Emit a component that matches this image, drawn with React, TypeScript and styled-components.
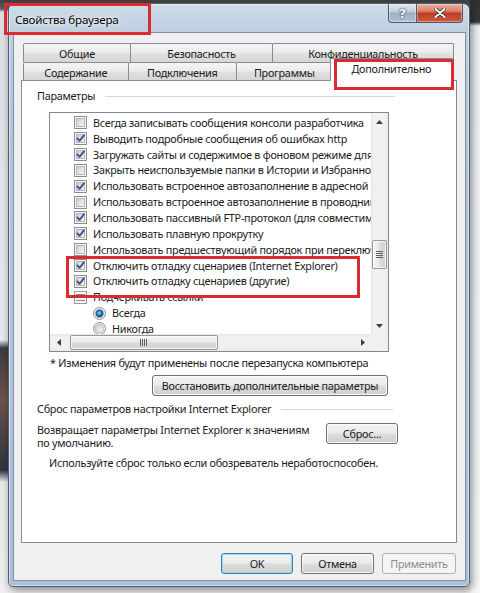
import React, { useId } from 'react';
import styled, { createGlobalStyle } from 'styled-components';

const UI_FONT = `'Noto Sans', 'Open Sans', 'DejaVu Sans', sans-serif`;
const ROW_H = 15.85;

const GlobalStyle = createGlobalStyle`
  * { box-sizing: border-box; }
  html, body { margin: 0; padding: 0; }
  body {
    font-family: ${UI_FONT};
    font-size: 10.8px;
    letter-spacing: -0.25px;
    color: #1a1a1a;
  }
`;

const Desktop = styled.div`
  position: relative;
  width: 480px;
  height: 593px;
  overflow: hidden;
  padding: 3px 0 0 8px;
  background:
    linear-gradient(180deg, #2e2e2e 0, #3a3a3a 22px, #eef1f5 26px, #f7f8fa 100%) right top / 10px 100% no-repeat,
    linear-gradient(180deg, #404040 0, #5b5b5b 9px, #dcdfe3 12px, #e7e9ec 340px, #3f3a3f 348px, #6b5348 400px, #2c3444 470px, #e9e9e9 482px, #f0f0f0 100%);
`;

const Window = styled.div`
  width: 462px;
  height: 584px;
  display: flex;
  flex-direction: column;
  padding: 0 3px 5px 4px;
  border: 1px solid #4e5f75;
  border-radius: 7px 7px 5px 5px;
  background: linear-gradient(180deg, #cfdbe8 0, #bfcfe1 28px, #b3c6dc 80px, #aabfd8 100%);
  box-shadow: inset 0 0 0 1px rgba(255, 255, 255, 0.45), 2px 3px 8px rgba(0, 0, 0, 0.45);
`;

const TitleBar = styled.div`
  height: 28px;
  display: flex;
  align-items: flex-start;
`;

const TitleText = styled.div`
  margin: 9px 0 0 2px;
  line-height: 14px;
  font-size: 11.6px;
  letter-spacing: -0.2px;
  color: #000;
  text-shadow: 0 0 6px rgba(255, 255, 255, 0.95), 0 0 2px rgba(255, 255, 255, 0.9);
`;

const CaptionButtons = styled.div`
  margin: 0 3px 0 auto;
  display: flex;
`;

const CaptionButton = styled.div<{ $kind: 'help' | 'close' }>`
  width: ${({ $kind }) => ($kind === 'close' ? 46 : 29)}px;
  height: 19px;
  display: flex;
  align-items: center;
  justify-content: center;
  border: 1px solid #4a5a70;
  border-top: 0;
  border-left-width: ${({ $kind }) => ($kind === 'close' ? 0 : 1)}px;
  border-radius: ${({ $kind }) => ($kind === 'close' ? '0 0 4px 0' : '0 0 0 4px')};
  background: ${({ $kind }) =>
    $kind === 'close'
      ? 'linear-gradient(180deg, #eab0a2 0, #d9806d 40%, #c23b22 52%, #cf5a3f 100%)'
      : 'linear-gradient(180deg, #e1e8f0 0, #c4d0de 40%, #9eb0c6 52%, #b2c3d7 100%)'};
  box-shadow: inset 0 0 0 1px rgba(255, 255, 255, 0.35);
  color: #fff;
  font-family: 'DejaVu Sans', sans-serif;
  font-weight: bold;
  font-size: 13px;
  letter-spacing: 0;
  text-shadow: 0 0 2px #22303f, 0 0 1px #22303f;
`;

const Client = styled.div`
  flex: 1;
  display: flex;
  flex-direction: column;
  border: 1px solid #7d90a8;
  background: #f0f0f0;
  padding: 10px 8px 0 7px;
`;

const TabStrip = styled.div`
  margin: 0 4px 0 2px;
  display: flex;
  flex-direction: column;
`;

const TabRow = styled.div<{ $h: number }>`
  height: ${({ $h }) => $h}px;
  display: flex;
  align-items: stretch;
`;

const Tab = styled.div<{ $w: number; $selected?: boolean }>`
  position: relative;
  width: ${({ $w, $selected }) => $w + ($selected ? 4 : 1)}px;
  margin-right: -1px;
  display: flex;
  align-items: center;
  justify-content: center;
  border: 1px solid #898c95;
  border-bottom: 0;
  border-radius: 2px 2px 0 0;
  white-space: nowrap;
  padding-top: 1px;
  background: linear-gradient(180deg, #f4f4f4 0%, #ececec 45%, #e0e0e0 55%, #d6d6d6 100%);
  ${({ $selected }) =>
    $selected &&
    `
    z-index: 2;
    margin: -4px 0 -1px -2px;
    padding-top: 0;
    padding-bottom: 4px;
    background: #fff;
  `}
`;

const Panel = styled.div`
  position: relative;
  z-index: 1;
  height: 463px;
  display: flex;
  flex-direction: column;
  border: 1px solid #898c95;
  background: #fff;
`;

const GroupHeader = styled.div<{ $top: number; $right: number }>`
  height: 14px;
  margin: ${({ $top, $right }) => `${$top}px ${$right}px 0 15px`};
  display: flex;
  align-items: center;
  gap: 10px;
  line-height: 14px;
  white-space: nowrap;
  &::after {
    content: '';
    flex: 1;
    height: 1px;
    background: #d5d9de;
  }
`;

const ListBox = styled.div`
  margin: 9px 0 0 27px;
  width: 340px;
  height: 240px;
  border: 1px solid #828790;
  display: grid;
  grid-template-columns: 1fr 17px;
  grid-template-rows: 1fr 17px;
`;

const ListViewport = styled.div`
  overflow: hidden;
  padding-top: 2px;
`;

const ListRow = styled.div<{ $indent: number }>`
  height: ${ROW_H}px;
  display: flex;
  align-items: center;
  padding-left: ${({ $indent }) => $indent}px;
  white-space: nowrap;
  line-height: 14px;
`;

const Glyph = styled.svg<{ $gap: number }>`
  flex: none;
  margin-right: ${({ $gap }) => $gap}px;
`;

const VScroll = styled.div`
  display: flex;
  flex-direction: column;
  background: linear-gradient(90deg, #e6e6e6 0, #f1f1f1 3px, #f1f1f1 13px, #e9e9e9 17px);
`;

const HScroll = styled.div`
  display: flex;
  background: linear-gradient(180deg, #e6e6e6 0, #f1f1f1 3px, #f1f1f1 13px, #e9e9e9 17px);
`;

const Corner = styled.div`
  background: #f0f0f0;
`;

const ArrowCell = styled.div`
  flex: none;
  width: 17px;
  height: 17px;
  display: flex;
  align-items: center;
  justify-content: center;
`;

const Thumb = styled.div<{ $vertical?: boolean; $offset: number; $len: number }>`
  flex: none;
  display: flex;
  align-items: center;
  justify-content: center;
  border: 1px solid #979797;
  border-radius: 2px;
  ${({ $vertical, $offset, $len }) =>
    $vertical
      ? `margin: ${$offset}px 1px 0; height: ${$len}px;
         background: linear-gradient(90deg, #f4f4f4 0%, #e9e9e9 45%, #d9d9d9 55%, #d2d2d2 100%);`
      : `margin: 1px 0 1px ${$offset}px; width: ${$len}px;
         background: linear-gradient(180deg, #f4f4f4 0%, #e9e9e9 45%, #d9d9d9 55%, #d2d2d2 100%);`}
  box-shadow: inset 0 0 0 1px rgba(255, 255, 255, 0.7);
`;

const Spacer = styled.div`
  flex: 1;
`;

const Note = styled.div<{ $left: number; $top: number }>`
  margin: ${({ $top, $left }) => `${$top}px 0 0 ${$left}px`};
  line-height: 14px;
  white-space: nowrap;
`;

const PushButton = styled.button<{ $w: number; $focused?: boolean }>`
  flex: none;
  width: ${({ $w }) => $w}px;
  height: 21px;
  padding: 0;
  font: inherit;
  letter-spacing: inherit;
  line-height: 14px;
  white-space: nowrap;
  color: #1a1a1a;
  border: 1px solid ${({ $focused }) => ($focused ? '#3c7fb1' : '#707070')};
  border-radius: 3px;
  background: linear-gradient(180deg, #f2f2f2 0%, #ebebeb 48%, #dddddd 52%, #cfcfcf 100%);
  box-shadow: inset 0 0 0 1px ${({ $focused }) => ($focused ? 'rgba(150, 215, 245, 0.9)' : 'rgba(255, 255, 255, 0.8)')};
  &:disabled {
    color: #8d8d8d;
    border-color: #adb2b5;
    background: #f4f4f4;
    box-shadow: none;
  }
`;

const RestoreButton = styled(PushButton)`
  margin: 5px 0 0 130px;
`;

const ResetRow = styled.div`
  margin: 7px 58px 0 15px;
  display: flex;
  align-items: flex-start;
  justify-content: space-between;
`;

const ResetText = styled.div`
  line-height: 13px;
  white-space: nowrap;
`;

const Footer = styled.div`
  margin: 10px 1px 0 0;
  display: flex;
  justify-content: flex-end;
  gap: 8px;
`;

const Highlight = styled.div<{ $x: number; $y: number; $w: number; $h: number }>`
  position: absolute;
  left: ${({ $x }) => $x}px;
  top: ${({ $y }) => $y}px;
  width: ${({ $w }) => $w}px;
  height: ${({ $h }) => $h}px;
  border: 3px solid #dc2a33;
  z-index: 10;
  pointer-events: none;
`;

const cleanId = (id: string) => id.replace(/[^a-zA-Z0-9_-]/g, '');

function CheckBox({ checked }: { checked: boolean }) {
  const id = cleanId(useId());
  return (
    <Glyph $gap={6} width="13" height="13" viewBox="0 0 13 13">
      <defs>
        <linearGradient id={id} x1="0" y1="0" x2="1" y2="1">
          <stop offset="0" stopColor="#c9cdd3" />
          <stop offset="1" stopColor="#f7f7f7" />
        </linearGradient>
      </defs>
      <rect x="0.5" y="0.5" width="12" height="12" fill="#f6f6f6" stroke="#8e8f8f" />
      <rect x="2.5" y="2.5" width="8" height="8" fill={`url(#${id})`} stroke="#b3b7bc" />
      {checked && (
        <path
          d="M3.3 6.4 L5.5 8.9 L9.9 3.3"
          fill="none"
          stroke="#3f5489"
          strokeWidth="1.9"
          strokeLinecap="round"
          strokeLinejoin="round"
        />
      )}
    </Glyph>
  );
}

function Radio({ selected }: { selected: boolean }) {
  const id = cleanId(useId());
  return (
    <Glyph $gap={6} width="13" height="13" viewBox="0 0 13 13">
      <defs>
        <linearGradient id={`${id}g`} x1="0" y1="0" x2="1" y2="1">
          <stop offset="0" stopColor="#c9cdd3" />
          <stop offset="1" stopColor="#f7f7f7" />
        </linearGradient>
        <radialGradient id={`${id}b`} cx="0.45" cy="0.4" r="0.6">
          <stop offset="0" stopColor="#8fd3fa" />
          <stop offset="0.5" stopColor="#2f8fd0" />
          <stop offset="1" stopColor="#17497e" />
        </radialGradient>
      </defs>
      <circle cx="6.5" cy="6.5" r="6" fill="#f6f6f6" stroke="#8e8f8f" />
      <circle cx="6.5" cy="6.5" r="4.2" fill={`url(#${id}g)`} stroke="#b3b7bc" />
      {selected && <circle cx="6.5" cy="6.5" r="3.4" fill={`url(#${id}b)`} stroke="#1b4679" strokeWidth="0.8" />}
    </Glyph>
  );
}

function GroupIcon() {
  return (
    <Glyph $gap={6} width="13" height="13" viewBox="0 0 13 13">
      <rect x="0.5" y="0.5" width="12" height="12" fill="#fafafa" stroke="#9a9a9a" />
      <path d="M2 3.5 H11 M2 6.5 H11 M2 9.5 H11" stroke="#8c8c8c" />
    </Glyph>
  );
}

function Arrow({ dir }: { dir: 'up' | 'down' | 'left' | 'right' }) {
  const paths = {
    up: 'M0 4 L3.5 0 L7 4 Z',
    down: 'M0 0 L7 0 L3.5 4 Z',
    left: 'M4 0 L4 7 L0 3.5 Z',
    right: 'M0 0 L4 3.5 L0 7 Z',
  };
  const vertical = dir === 'up' || dir === 'down';
  return (
    <ArrowCell>
      <svg width={vertical ? 7 : 4} height={vertical ? 4 : 7}>
        <path d={paths[dir]} fill="#3c3c3c" />
      </svg>
    </ArrowCell>
  );
}

function Grip({ vertical }: { vertical?: boolean }) {
  return vertical ? (
    <svg width="7" height="8">
      <path d="M0 0.5 H7 M0 2.5 H7 M0 4.5 H7 M0 6.5 H7" stroke="#5f5f5f" />
    </svg>
  ) : (
    <svg width="8" height="7">
      <path d="M0.5 0 V7 M2.5 0 V7 M4.5 0 V7 M6.5 0 V7" stroke="#5f5f5f" />
    </svg>
  );
}

function CloseGlyph() {
  return (
    <svg width="12" height="10" viewBox="0 0 12 10">
      <path
        d="M1.5 1 L10.5 9 M10.5 1 L1.5 9"
        stroke="#3b2a25"
        strokeWidth="3.6"
        strokeLinecap="round"
      />
      <path d="M1.5 1 L10.5 9 M10.5 1 L1.5 9" stroke="#fff" strokeWidth="2" strokeLinecap="round" />
    </svg>
  );
}

type Item =
  | { kind: 'check'; text: string; on: boolean }
  | { kind: 'group'; text: string }
  | { kind: 'radio'; text: string; on: boolean };

const items: Item[] = [
  { kind: 'check', text: 'Всегда записывать сообщения консоли разработчика', on: false },
  { kind: 'check', text: 'Выводить подробные сообщения об ошибках http', on: true },
  { kind: 'check', text: 'Загружать сайты и содержимое в фоновом режиме для оптимизации', on: true },
  { kind: 'check', text: 'Закрыть неиспользуемые папки в Истории и Избранном', on: false },
  { kind: 'check', text: 'Использовать встроенное автозаполнение в адресной строке', on: true },
  { kind: 'check', text: 'Использовать встроенное автозаполнение в проводнике', on: false },
  { kind: 'check', text: 'Использовать пассивный FTP-протокол (для совместимости)', on: true },
  { kind: 'check', text: 'Использовать плавную прокрутку', on: true },
  { kind: 'check', text: 'Использовать предшествующий порядок при переключении вкладок', on: false },
  { kind: 'check', text: 'Отключить отладку сценариев (Internet Explorer)', on: true },
  { kind: 'check', text: 'Отключить отладку сценариев (другие)', on: true },
  { kind: 'group', text: 'Подчеркивать ссылки' },
  { kind: 'radio', text: 'Всегда', on: true },
  { kind: 'radio', text: 'Никогда', on: false },
];

const backTabs = [
  { label: 'Общие', w: 107 },
  { label: 'Безопасность', w: 142 },
  { label: 'Конфиденциальность', w: 181 },
];

const frontTabs = [
  { label: 'Содержание', w: 105 },
  { label: 'Подключения', w: 109 },
  { label: 'Программы', w: 96 },
  { label: 'Дополнительно', w: 120, selected: true },
];

export default function App() {
  return (
    <Desktop>
      <GlobalStyle />
      <Window>
        <TitleBar>
          <TitleText>Свойства браузера</TitleText>
          <CaptionButtons>
            <CaptionButton $kind="help">?</CaptionButton>
            <CaptionButton $kind="close">
              <CloseGlyph />
            </CaptionButton>
          </CaptionButtons>
        </TitleBar>

        <Client>
          <TabStrip>
            <TabRow $h={19}>
              {backTabs.map((t) => (
                <Tab key={t.label} $w={t.w}>
                  {t.label}
                </Tab>
              ))}
            </TabRow>
            <TabRow $h={18}>
              {frontTabs.map((t) => (
                <Tab key={t.label} $w={t.w} $selected={t.selected}>
                  {t.label}
                </Tab>
              ))}
            </TabRow>
          </TabStrip>

          <Panel>
            <GroupHeader $top={8} $right={61}>Параметры</GroupHeader>

            <ListBox>
              <ListViewport>
                {items.map((it) => (
                  <ListRow key={it.text} $indent={it.kind === 'radio' ? 43 : 24}>
                    {it.kind === 'check' && <CheckBox checked={it.on} />}
                    {it.kind === 'group' && <GroupIcon />}
                    {it.kind === 'radio' && <Radio selected={it.on} />}
                    {it.text}
                  </ListRow>
                ))}
              </ListViewport>
              <VScroll>
                <Arrow dir="up" />
                <Thumb $vertical $offset={110} $len={29}>
                  <Grip vertical />
                </Thumb>
                <Spacer />
                <Arrow dir="down" />
              </VScroll>
              <HScroll>
                <Arrow dir="left" />
                <Thumb $offset={3} $len={148}>
                  <Grip />
                </Thumb>
                <Spacer />
                <Arrow dir="right" />
              </HScroll>
              <Corner />
            </ListBox>

            <Note $left={28} $top={4}>* Изменения будут применены после перезапуска компьютера</Note>
            <RestoreButton $w={236}>Восстановить дополнительные параметры</RestoreButton>

            <GroupHeader $top={6} $right={63}>Сброс параметров настройки Internet Explorer</GroupHeader>
            <ResetRow>
              <ResetText>
                Возвращает параметры Internet Explorer к значениям
                <br />
                по умолчанию.
              </ResetText>
              <PushButton $w={72}>Сброс...</PushButton>
            </ResetRow>
            <Note $left={27} $top={7}>Используйте сброс только если обозреватель неработоспособен.</Note>
          </Panel>

          <Footer>
            <PushButton $w={72} $focused>OK</PushButton>
            <PushButton $w={73}>Отмена</PushButton>
            <PushButton $w={74} disabled>Применить</PushButton>
          </Footer>
        </Client>
      </Window>

      <Highlight $x={4} $y={3} $w={147} $h={32} />
      <Highlight $x={334} $y={59} $w={120} $h={31} />
      <Highlight $x={66} $y={256} $w={294} $h={42} />
    </Desktop>
  );
}
